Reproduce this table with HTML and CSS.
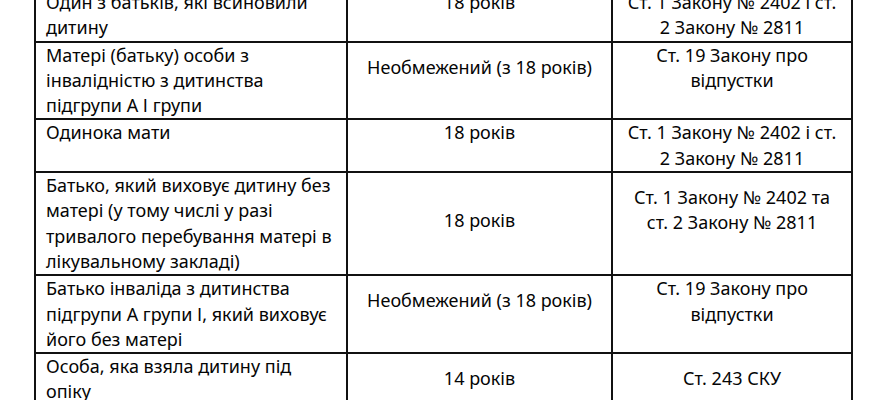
FILE: index.html
```html
<!DOCTYPE html>
<html lang="uk">
<head>
<meta charset="utf-8">
<title>Таблиця</title>
<link rel="stylesheet" href="styles.css">
</head>
<body>
<table class="tbl">
  <colgroup>
    <col class="c1">
    <col class="c2">
    <col class="c3">
  </colgroup>
  <tr>
    <td class="who">Один з батьків, які всиновили<br>дитину</td>
    <td class="age">18 років</td>
    <td class="law">Ст. 1 Закону № 2402 і ст.<br>2 Закону № 2811</td>
  </tr>
  <tr>
    <td class="who">Матері (батьку) особи з<br>інвалідністю з дитинства<br>підгрупи А І групи</td>
    <td class="age off12">Необмежений (з 18 років)</td>
    <td class="law">Ст. 19 Закону про<br>відпустки</td>
  </tr>
  <tr>
    <td class="who">Одинока мати</td>
    <td class="age">18 років</td>
    <td class="law">Ст. 1 Закону № 2402 і ст.<br>2 Закону № 2811</td>
  </tr>
  <tr>
    <td class="who">Батько, який виховує дитину без<br>матері (у тому числі у разі<br>тривалого перебування матері в<br>лікувальному закладі)</td>
    <td class="age off35">18 років</td>
    <td class="law off12">Ст. 1 Закону № 2402 та<br>ст. 2 Закону № 2811</td>
  </tr>
  <tr>
    <td class="who">Батько інваліда з дитинства<br>підгрупи А групи І, який виховує<br>його без матері</td>
    <td class="age off12">Необмежений (з 18 років)</td>
    <td class="law">Ст. 19 Закону про<br>відпустки</td>
  </tr>
  <tr>
    <td class="who">Особа, яка взяла дитину під<br>опіку</td>
    <td class="age off12">14 років</td>
    <td class="law off12">Ст. 243 СКУ</td>
  </tr>
</table>
</body>
</html>
```

FILE: styles.css
```css
html, body {
  margin: 0;
  padding: 0;
  background: #ffffff;
  overflow: hidden;
}

body {
  font-family: "Noto Sans", "Open Sans", sans-serif;
  font-size: 18px;
  font-weight: 450;
  line-height: 25.3px;
  color: #050505;
}

.tbl {
  border-collapse: collapse;
  table-layout: fixed;
  width: 817px;
  margin: -12px 0 0 34px;
}

.c1 { width: 312px; }
.c2 { width: 265px; }
.c3 { width: 240px; }

.tbl td {
  border: 2px solid #111111;
  padding: 0 2px;
  vertical-align: top;
  white-space: nowrap;
}

.tbl td.who {
  padding-left: 10px;
  text-align: left;
}

.tbl td.age,
.tbl td.law {
  text-align: center;
}

.tbl td.off12 { padding-top: 12px; }
.tbl td.off35 { padding-top: 35px; }
```
